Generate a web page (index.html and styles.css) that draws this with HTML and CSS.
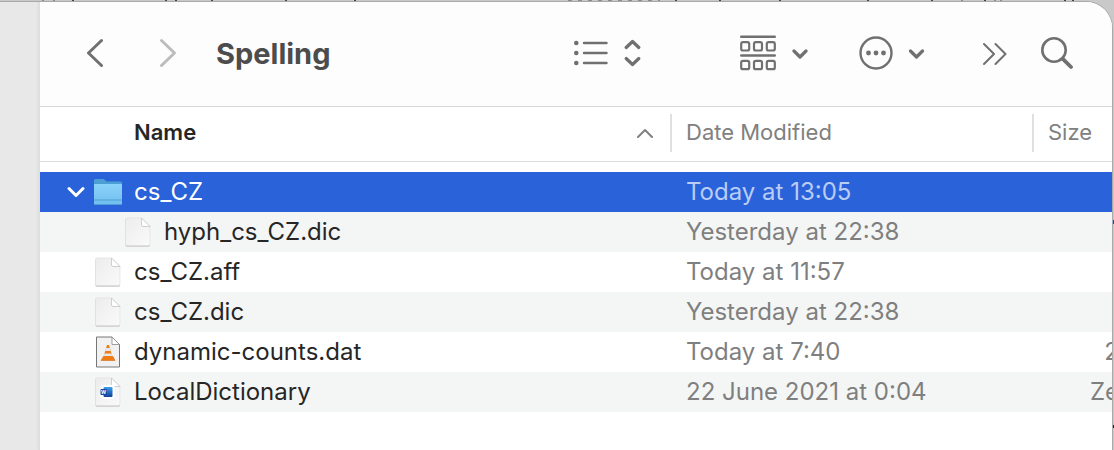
FILE: index.html
```html
<!DOCTYPE html>
<html lang="en">
<head>
  <meta charset="UTF-8" />
  <meta name="viewport" content="width=device-width, initial-scale=1.0" />
  <title>Spelling</title>
  <link rel="stylesheet" href="styles.css">
</head>
<body>
  <!-- shared file icons -->
  <svg class="defs" aria-hidden="true">
    <defs>
      <linearGradient id="paper" x1="0" y1="0" x2="1" y2="1">
        <stop offset="0" stop-color="#ececec" />
        <stop offset="1" stop-color="#fafafa" />
      </linearGradient>
      <linearGradient id="folderFront" x1="0" y1="0" x2="0" y2="1">
        <stop offset="0" stop-color="#8bd3fb" />
        <stop offset="1" stop-color="#70bdec" />
      </linearGradient>
      <linearGradient id="wordBlue" x1="0" y1="0" x2="0" y2="1">
        <stop offset="0" stop-color="#3ba0ea" />
        <stop offset="1" stop-color="#123f99" />
      </linearGradient>
      <symbol id="file" viewBox="0 0 28 32">
        <path d="M3 2H17L26 11V28.500Q26 30 24.500 30H3Q1.500 30 1.500 28.500V3.500Q1.500 2 3 2Z" fill="#c9c9c9" transform="translate(0 .8)" />
        <path d="M3 2H17.500L26 10.500V28Q26 29.500 24.500 29.500H3Q1.500 29.500 1.500 28V3.500Q1.500 2 3 2Z" fill="url(#paper)" stroke="#dcdcdc" stroke-width=".6" />
        <path d="M17.500 2V9Q17.500 10.500 19 10.500H26Z" fill="#fff" stroke="#c4c4c4" stroke-width=".8" />
      </symbol>
    </defs>
  </svg>

  <svg class="behind" width="1114" height="2" aria-hidden="true">
    <path d="M43 0v2M54 0v2M568 1h92M962 0v2M995 0v2M1001 0v2" stroke="#8a8a8a" stroke-width="2" stroke-dasharray="4 6" />
    <path d="M73 0v2M166 0v2M176 0v2M212 0v2M286 0v2M355 0v2M676 0v2M720 0v2M780 0v2M868 0v2M932 0v2M985 0v2M1065 0v2M1073 0v2" stroke="#444" stroke-width="2" />
  </svg>

  <div class="window">
    <div class="sidebar"></div>
    <div class="main">
      <div class="toolbar">
        <button type="button" class="back" aria-label="Back">
          <svg width="18" height="30" viewBox="0 0 18 30"><path d="M14.500 2.500L1.500 15L14.500 27.500" /></svg>
        </button>
        <button type="button" class="forward" aria-label="Forward">
          <svg width="18" height="30" viewBox="0 0 18 30"><path d="M2.500 2.500L15.500 15L2.500 27.500" /></svg>
        </button>
        <h1>Spelling</h1>

        <button type="button" class="view" aria-label="View as list">
          <svg width="34" height="30" viewBox="0 0 34 30">
            <path d="M10 5H32.500M10 15H32.500M10 25H32.500" stroke-width="2.400" />
            <g class="solid"><circle cx="2.300" cy="5" r="2.300" /><circle cx="2.300" cy="15" r="2.300" /><circle cx="2.300" cy="25" r="2.300" /></g>
          </svg>
          <svg width="18" height="30" viewBox="0 0 18 30"><path d="M2.200 9.500L8.500 3.500L14.800 9.500M2.200 20.500L8.500 26.500L14.800 20.500" stroke-width="3.200" /></svg>
        </button>
        <button type="button" class="group" aria-label="Group">
          <svg width="36" height="36" viewBox="0 0 36 36">
            <path d="M1.200 1.700H34.800M1.200 20.500H34.800" stroke-width="2.400" />
            <g stroke-width="2.200">
              <rect x="1.200" y="7.100" width="8" height="8.400" rx="1.800" />
              <rect x="14" y="7.100" width="8" height="8.400" rx="1.800" />
              <rect x="26.800" y="7.100" width="8" height="8.400" rx="1.800" />
              <rect x="1.200" y="25.800" width="8" height="8.400" rx="1.800" />
              <rect x="14" y="25.800" width="8" height="8.400" rx="1.800" />
              <rect x="26.800" y="25.800" width="8" height="8.400" rx="1.800" />
            </g>
          </svg>
          <svg width="16" height="30" viewBox="0 0 16 30"><path d="M2 13L8 19L14 13" stroke-width="3.200" /></svg>
        </button>
        <button type="button" class="actions" aria-label="Actions">
          <svg width="34" height="34" viewBox="0 0 34 34">
            <circle cx="17" cy="17" r="15.500" stroke-width="2.400" />
            <g class="solid"><circle cx="9.500" cy="17" r="2.400" /><circle cx="17" cy="17" r="2.400" /><circle cx="24.500" cy="17" r="2.400" /></g>
          </svg>
          <svg width="16" height="30" viewBox="0 0 16 30"><path d="M1.500 13L7.500 19L13.500 13" stroke-width="3.200" /></svg>
        </button>
        <button type="button" class="more" aria-label="More toolbar items">
          <svg width="24" height="30" viewBox="0 0 24 30"><path d="M1 6L11 16L1 26M12.500 6L22.500 16L12.500 26" stroke-width="2" /></svg>
        </button>
        <button type="button" class="search" aria-label="Search">
          <svg width="32" height="34" viewBox="0 0 32 34"><circle cx="13" cy="14" r="11.700" stroke-width="2.600" /><path d="M21.800 22.800L30 31" stroke-width="3.800" /></svg>
        </button>
      </div>

      <table>
        <thead>
          <tr>
            <th class="name" scope="col" aria-sort="ascending">
              <div class="sort">Name
                <svg width="16" height="10" viewBox="0 0 16 10"><path d="M1 9L8 2L15 9" /></svg>
              </div>
            </th>
            <th class="date" scope="col">Date Modified</th>
            <th class="size" scope="col">Size</th>
          </tr>
        </thead>
        <tbody>
          <tr class="selected">
            <td class="name">
              <div class="file">
                <button type="button" class="toggle" aria-label="Collapse" aria-expanded="true">
                  <svg width="18" height="12" viewBox="0 0 18 12"><path d="M2 2.500L9 9.500L16 2.500" /></svg>
                </button>
                <svg class="icon" viewBox="0 0 28 32">
                  <path d="M0 28V4.500Q0 3 1.500 3H9Q10.500 3 11.500 4.500L12.500 5.500H26.500Q28 5.500 28 7V28Z" fill="#4b9fd4" />
                  <path d="M0 9Q0 8 1 8H27Q28 8 28 9V27.500Q28 29 26.500 29H1.500Q0 29 0 27.500Z" fill="url(#folderFront)" />
                  <path d="M0 24H28M0 28.500H28" stroke="#4b9cd3" stroke-width=".9" />
                </svg>
                <span>cs_CZ</span>
              </div>
            </td>
            <td>Today at 13:05</td>
            <td class="size"></td>
          </tr>
          <tr>
            <td class="name">
              <div class="file nested">
                <svg class="icon"><use href="#file" /></svg>
                <span>hyph_cs_CZ.dic</span>
              </div>
            </td>
            <td>Yesterday at 22:38</td>
            <td class="size"></td>
          </tr>
          <tr>
            <td class="name">
              <div class="file">
                <svg class="icon"><use href="#file" /></svg>
                <span>cs_CZ.aff</span>
              </div>
            </td>
            <td>Today at 11:57</td>
            <td class="size"></td>
          </tr>
          <tr>
            <td class="name">
              <div class="file">
                <svg class="icon"><use href="#file" /></svg>
                <span>cs_CZ.dic</span>
              </div>
            </td>
            <td>Yesterday at 22:38</td>
            <td class="size"></td>
          </tr>
          <tr>
            <td class="name">
              <div class="file">
                <svg class="icon" viewBox="0 0 28 32">
                  <path d="M2.500 1H18L25.500 8.500V31H2.500Z" fill="#f1f1f1" stroke="#777" stroke-width="1" />
                  <path d="M18 1V8.500H25.500Z" fill="#fff" stroke="#888" stroke-width=".8" />
                  <path d="M9.500 20.500H19L21 24.500H7Z" fill="#f07c12" stroke="#c95f08" stroke-width=".5" />
                  <path d="M13 9H15L18.800 22H9.200Z" fill="#ef7d16" />
                  <path d="M12.100 12H15.900L16.700 15H11.300ZM10.500 17.500H17.500L18.200 20H9.800Z" fill="#e4e8ea" />
                </svg>
                <span>dynamic-counts.dat</span>
              </div>
            </td>
            <td>Today at 7:40</td>
            <td class="size">2</td>
          </tr>
          <tr>
            <td class="name">
              <div class="file">
                <svg class="icon" viewBox="0 0 28 32">
                  <use href="#file" />
                  <rect x="6" y="9" width="15" height="14" rx="3" fill="#fff" />
                  <rect x="9.500" y="11" width="9" height="10" rx="1" fill="url(#wordBlue)" />
                  <rect x="6.500" y="13" width="6.500" height="6" rx=".8" fill="#174ba8" />
                  <text class="word" x="9.700" y="18">W</text>
                </svg>
                <span>LocalDictionary</span>
              </div>
            </td>
            <td>22 June 2021 at 0:04</td>
            <td class="size">Ze</td>
          </tr>
        </tbody>
      </table>
    </div>
  </div>
</body>
</html>
```
FILE: styles.css
```css
* {
  box-sizing: border-box;
}
body {
  margin: 0;
  padding: 2px 2px 0 0;
  min-height: 100vh;
  display: flex;
  overflow: hidden;
  background:
    linear-gradient(#1f4a80, #1f4a80) right 220px / 2px 4px no-repeat,
    linear-gradient(#222, #222) right 425px / 2px 3px no-repeat,
    #c9c9c9;
  font-family: Inter, "Liberation Sans", sans-serif;
  font-size: 24px;
}
.defs {
  position: absolute;
  width: 0;
  height: 0;
}
.behind {
  position: absolute;
  top: 0;
  left: 0;
}
.window {
  position: relative;
  flex: 1;
  min-width: 0;
  display: flex;
  overflow: hidden;
  border-radius: 0 26px 0 0;
  background: #fff;
  box-shadow: 0 0 0 1px #aaa;
}
.sidebar {
  flex: 0 0 40px;
  background: linear-gradient(to right, #e8e8e8 90%, #dcdcdc);
}
.main {
  flex: 1;
  min-width: 0;
  overflow: hidden;
}

/* toolbar */
.toolbar {
  height: 105px;
  display: flex;
  align-items: center;
  padding: 0 39px 2px 47px;
  background: #fdfdfd;
  border-bottom: 1px solid #d8d8d8;
}
.toolbar svg,
.sort svg,
.toggle svg {
  display: block;
  fill: none;
  stroke: currentColor;
  stroke-width: 3;
  stroke-linecap: round;
  stroke-linejoin: round;
}
.toolbar .solid {
  fill: currentColor;
  stroke: none;
}
button {
  display: flex;
  align-items: center;
  gap: 16px;
  padding: 0;
  border: 0;
  background: none;
  color: #707070;
}
.forward {
  margin-left: 54px;
  color: #bcbcbc;
}
h1 {
  margin: 0 auto 0 39px;
  padding-top: 2px;
  font-size: 29px;
  line-height: 36px;
  font-weight: 700;
  color: #4c4c4c;
}
.view {
  margin-right: 98px;
}
.group {
  margin-right: 51px;
}
.actions {
  margin-right: 58px;
}
.more {
  margin-right: 34px;
}

/* file list, the size column runs past the window edge */
table {
  width: calc(100% + 7px);
  table-layout: fixed;
  border-collapse: collapse;
}
th {
  height: 54px;
  padding: 0 0 3px 16px;
  text-align: left;
  font-size: 22px;
  font-weight: 400;
  color: #808080;
  background: linear-gradient(#e0e0e0, #e0e0e0) left 7px / 2px 38px no-repeat;
}
th.name {
  padding-left: 94px;
  font-weight: 600;
  color: #262626;
  background: none;
}
th.date {
  width: 362px;
}
th.size {
  width: 87px;
}
thead {
  border-bottom: 1px solid #dcdcdc;
}
tbody::before {
  content: "";
  display: block;
  height: 10px;
}
.sort {
  display: flex;
  align-items: center;
  justify-content: space-between;
  padding-right: 17px;
}
.sort svg {
  margin-top: 2px;
  color: #808080;
  stroke-width: 2;
}
td {
  height: 40px;
  padding: 0 0 0 16px;
  line-height: 28px;
  color: #7f7f7f;
  white-space: nowrap;
}
td.name {
  padding-left: 54px;
  color: #262626;
}
td.size {
  text-align: right;
}
tbody tr:nth-child(even) {
  background: #f4f6f5;
}
.file {
  position: relative;
  display: flex;
  align-items: center;
  gap: 12px;
}
.nested {
  padding-left: 30px;
}
.icon {
  width: 28px;
  height: 32px;
}
.toggle {
  position: absolute;
  left: -27px;
  color: #fff;
}
.word {
  font-size: 5px;
  font-weight: 700;
  fill: #fff;
  text-anchor: middle;
}
tbody tr.selected {
  background: #2962d9;
}
.selected td {
  color: #b9cdf5;
}
.selected td.name {
  color: #fff;
}
```
